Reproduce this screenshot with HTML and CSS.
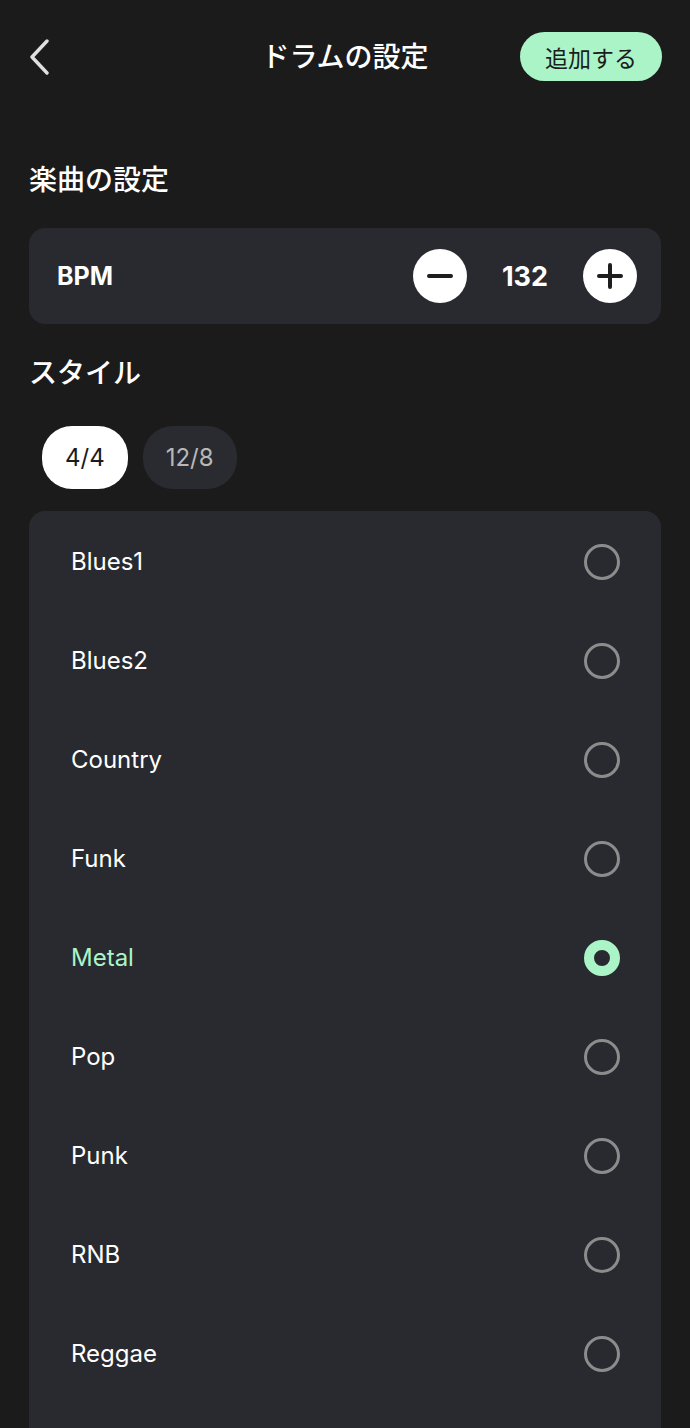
FILE: index.html
```html
<!DOCTYPE html>
<html lang="ja">
  <head>
    <meta charset="UTF-8" />
    <meta name="viewport" content="width=device-width, initial-scale=1.0" />
    <title>ドラムの設定</title>
    <link rel="stylesheet" href="styles.css">
  </head>
  <body>
    <div id="header">
      <button class="back-button" aria-label="戻る">
        <svg width="22" height="36" viewBox="0 0 22 36">
          <path d="M18 2 L3 18 L18 34" fill="none" stroke="#e0e0e0" stroke-width="3.4" stroke-linecap="round" stroke-linejoin="round" />
        </svg>
      </button>
      <h1>ドラムの設定</h1>
      <button class="add-button">追加する</button>
    </div>

    <div id="main">
      <h2>楽曲の設定</h2>
      <div class="card bpm-card">
        <span class="bpm-label">BPM</span>
        <div class="stepper">
          <button class="round-button" aria-label="減らす">
            <svg width="26" height="26" viewBox="0 0 26 26">
              <path d="M2 13 H24" stroke="#1e1e1e" stroke-width="4" stroke-linecap="round" />
            </svg>
          </button>
          <span class="bpm-value">132</span>
          <button class="round-button" aria-label="増やす">
            <svg width="26" height="26" viewBox="0 0 26 26">
              <path d="M2 13 H24 M13 2 V24" stroke="#1e1e1e" stroke-width="4" stroke-linecap="round" />
            </svg>
          </button>
        </div>
      </div>

      <h2>スタイル</h2>
      <div class="chips">
        <button class="chip active">4/4</button>
        <button class="chip">12/8</button>
      </div>

      <div class="card style-list">
        <div class="style-row"><span>Blues1</span><span class="radio"></span></div>
        <div class="style-row"><span>Blues2</span><span class="radio"></span></div>
        <div class="style-row"><span>Country</span><span class="radio"></span></div>
        <div class="style-row"><span>Funk</span><span class="radio"></span></div>
        <div class="style-row selected"><span>Metal</span><span class="radio"></span></div>
        <div class="style-row"><span>Pop</span><span class="radio"></span></div>
        <div class="style-row"><span>Punk</span><span class="radio"></span></div>
        <div class="style-row"><span>RNB</span><span class="radio"></span></div>
        <div class="style-row"><span>Reggae</span><span class="radio"></span></div>
      </div>
    </div>
  </body>
</html>
```

FILE: styles.css
```css
body {
  margin: 0;
  height: 1428px;
  overflow: hidden;
  background-color: #1b1b1b;
  color: #ffffff;
  font-family: "Inter", "Noto Sans CJK JP", sans-serif;
}

button {
  font-family: inherit;
  border: none;
  cursor: pointer;
}

#header {
  height: 112px;
  display: flex;
  align-items: center;
  justify-content: space-between;
  padding: 0 28px 0 28px;
  position: relative;
}

.back-button {
  background: none;
  padding: 0;
  width: 24px;
  height: 36px;
  margin-top: 2px;
}

#header h1 {
  position: absolute;
  left: 0;
  right: 0;
  top: 0;
  margin: 0;
  line-height: 110px;
  text-align: center;
  font-size: 28px;
  font-weight: 500;
  font-family: "Noto Sans CJK JP", sans-serif;
  pointer-events: none;
}

.add-button {
  position: relative;
  background-color: #aaf4c8;
  color: #1c1c1c;
  height: 49px;
  width: 142px;
  border-radius: 25px;
  font-size: 23px;
  font-family: "Noto Sans CJK JP", sans-serif;
  margin-top: 1px;
}

#main {
  padding: 0 29px;
}

#main h2 {
  margin: 0;
  font-size: 28px;
  font-weight: 500;
  font-family: "Noto Sans CJK JP", sans-serif;
  line-height: 36px;
}

#main h2:first-child {
  margin-top: 48px;
}

.card {
  background-color: #292a2f;
  border-radius: 16px;
}

.bpm-card {
  margin-top: 32px;
  height: 96px;
  display: flex;
  align-items: center;
  justify-content: space-between;
  padding: 0 24px 0 28px;
  margin-bottom: 29px;
}

.bpm-label {
  font-size: 25px;
  font-weight: 700;
}

.stepper {
  display: flex;
  align-items: center;
}

.round-button {
  width: 54px;
  height: 54px;
  border-radius: 50%;
  background-color: #ffffff;
  display: flex;
  align-items: center;
  justify-content: center;
  padding: 0;
}

.bpm-value {
  width: 116px;
  text-align: center;
  font-size: 27px;
  font-weight: 700;
}

.chips {
  display: flex;
  gap: 15px;
  padding-left: 13px;
  margin-top: 37px;
  margin-bottom: 22px;
}

.chip {
  height: 63px;
  padding: 0 23px;
  border-radius: 30px;
  background-color: #2a2b30;
  color: #b8b8b8;
  font-size: 24px;
}

.chip.active {
  background-color: #ffffff;
  color: #1b1b1b;
}

.style-list {
  border-radius: 16px 16px 0 0;
  height: 917px;
  padding-top: 1px;
  box-sizing: border-box;
}

.style-row {
  height: 99px;
  display: flex;
  align-items: center;
  justify-content: space-between;
  padding: 0 41px 0 42px;
  font-size: 24px;
  color: #ffffff;
}

.radio {
  width: 36px;
  height: 36px;
  box-sizing: border-box;
  border: 3px solid #8c8c8c;
  border-radius: 50%;
}

.style-row.selected {
  color: #aaf4c8;
}

.style-row.selected .radio {
  border: 10px solid #aaf4c8;
}
```
